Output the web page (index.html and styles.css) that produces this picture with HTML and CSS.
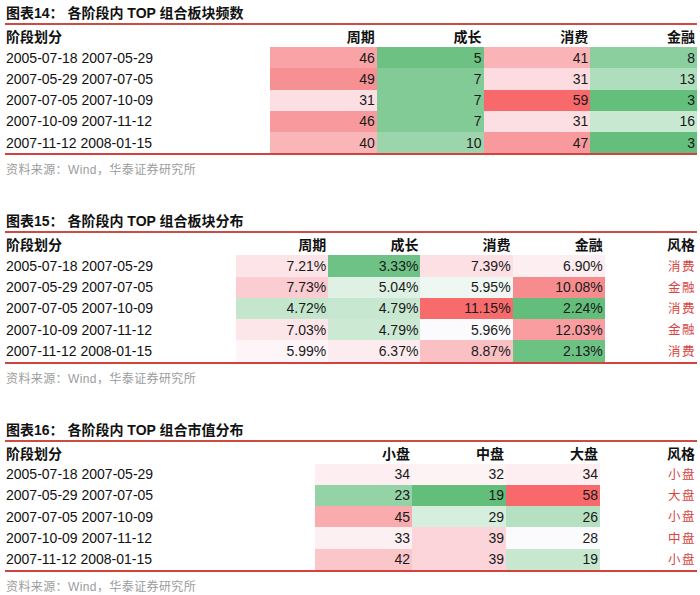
FILE: index.html
```html
<!DOCTYPE html>
<html lang="zh-CN">
<head>
<meta charset="utf-8">
<title>各阶段内 TOP 组合</title>
<link rel="stylesheet" href="styles.css">
</head>
<body>
<main class="page">

<section class="block first">
  <h2 class="title">图表14： 各阶段内 TOP 组合板块频数</h2>
  <div class="grid g14">
    <div class="hd lbl">阶段划分</div><div class="hd">周期</div><div class="hd">成长</div><div class="hd">消费</div><div class="hd">金融</div>

    <div class="lbl">2005-07-18 2007-05-29</div>
    <div class="c" style="background:#f9a3a6">46</div>
    <div class="c" style="background:#6cc183">5</div>
    <div class="c" style="background:#fab3b6">41</div>
    <div class="c" style="background:#8bcf9f">8</div>

    <div class="lbl">2007-05-29 2007-07-05</div>
    <div class="c" style="background:#f79093">49</div>
    <div class="c" style="background:#82ca96">7</div>
    <div class="c" style="background:#fcdce0">31</div>
    <div class="c" style="background:#afdebc">13</div>

    <div class="lbl">2007-07-05 2007-10-09</div>
    <div class="c" style="background:#fcdfe3">31</div>
    <div class="c" style="background:#82ca96">7</div>
    <div class="c" style="background:#f8696b">59</div>
    <div class="c" style="background:#65bf7c">3</div>

    <div class="lbl">2007-10-09 2007-11-12</div>
    <div class="c" style="background:#f89a9d">46</div>
    <div class="c" style="background:#82ca96">7</div>
    <div class="c" style="background:#fcdfe3">31</div>
    <div class="c" style="background:#c8e8d1">16</div>

    <div class="lbl">2007-11-12 2008-01-15</div>
    <div class="c" style="background:#f9b6b9">40</div>
    <div class="c" style="background:#9cd5ac">10</div>
    <div class="c" style="background:#f89a9d">47</div>
    <div class="c" style="background:#65bf7c">3</div>
  </div>
  <p class="source">资料来源：Wind，华泰证券研究所</p>
</section>

<section class="block">
  <h2 class="title">图表15： 各阶段内 TOP 组合板块分布</h2>
  <div class="grid g15">
    <div class="hd lbl">阶段划分</div><div class="hd">周期</div><div class="hd">成长</div><div class="hd">消费</div><div class="hd">金融</div><div class="hd">风格</div>

    <div class="lbl">2005-07-18 2007-05-29</div>
    <div class="c" style="background:#fde4e8">7.21%</div>
    <div class="c" style="background:#6fc286">3.33%</div>
    <div class="c" style="background:#fde0e4">7.39%</div>
    <div class="c" style="background:#fdeef1">6.90%</div>
    <div class="c style">消费</div>

    <div class="lbl">2007-05-29 2007-07-05</div>
    <div class="c" style="background:#fbccd1">7.73%</div>
    <div class="c" style="background:#dff1e5">5.04%</div>
    <div class="c" style="background:#eef7f1">5.95%</div>
    <div class="c" style="background:#f78c8f">10.08%</div>
    <div class="c style">金融</div>

    <div class="lbl">2007-07-05 2007-10-09</div>
    <div class="c" style="background:#c4e6cd">4.72%</div>
    <div class="c" style="background:#c7e7d0">4.79%</div>
    <div class="c" style="background:#f76b6d">11.15%</div>
    <div class="c" style="background:#63be7b">2.24%</div>
    <div class="c style">消费</div>

    <div class="lbl">2007-10-09 2007-11-12</div>
    <div class="c" style="background:#fde6ea">7.03%</div>
    <div class="c" style="background:#cbe9d3">4.79%</div>
    <div class="c" style="background:#fbfafc">5.96%</div>
    <div class="c" style="background:#f99da0">12.03%</div>
    <div class="c style">金融</div>

    <div class="lbl">2007-11-12 2008-01-15</div>
    <div class="c" style="background:#fdf5f7">5.99%</div>
    <div class="c" style="background:#fdecef">6.37%</div>
    <div class="c" style="background:#fac0c4">8.87%</div>
    <div class="c" style="background:#6cc283">2.13%</div>
    <div class="c style">消费</div>
  </div>
  <p class="source">资料来源：Wind，华泰证券研究所</p>
</section>

<section class="block">
  <h2 class="title">图表16： 各阶段内 TOP 组合市值分布</h2>
  <div class="grid g16">
    <div class="hd lbl">阶段划分</div><div class="hd">小盘</div><div class="hd">中盘</div><div class="hd">大盘</div><div class="hd">风格</div>

    <div class="lbl">2005-07-18 2007-05-29</div>
    <div class="c" style="background:#fdeef1">34</div>
    <div class="c" style="background:#fdf3f5">32</div>
    <div class="c" style="background:#fdeef1">34</div>
    <div class="c style">小盘</div>

    <div class="lbl">2007-05-29 2007-07-05</div>
    <div class="c" style="background:#94d3a6">23</div>
    <div class="c" style="background:#63be7b">19</div>
    <div class="c" style="background:#f8696b">58</div>
    <div class="c style">大盘</div>

    <div class="lbl">2007-07-05 2007-10-09</div>
    <div class="c" style="background:#f9abae">45</div>
    <div class="c" style="background:#d6eedd">29</div>
    <div class="c" style="background:#b5e0c1">26</div>
    <div class="c style">小盘</div>

    <div class="lbl">2007-10-09 2007-11-12</div>
    <div class="c" style="background:#fdf0f2">33</div>
    <div class="c" style="background:#fcd5da">39</div>
    <div class="c" style="background:#fbfbfd">28</div>
    <div class="c style">中盘</div>

    <div class="lbl">2007-11-12 2008-01-15</div>
    <div class="c" style="background:#fac6ca">42</div>
    <div class="c" style="background:#fcd5da">39</div>
    <div class="c" style="background:#c7e7cf">19</div>
    <div class="c style">小盘</div>
  </div>
  <p class="source">资料来源：Wind，华泰证券研究所</p>
</section>

</main>
</body>
</html>
```

FILE: styles.css
```css
html, body {
  margin: 0;
  padding: 0;
  background: #ffffff;
}

body {
  font-family: "Liberation Sans", "Noto Sans CJK SC", sans-serif;
  color: #111111;
  font-size: 14px;
}

.page {
  width: 692px;
  margin-left: 5px;
  padding-top: 3px;
}

.block {
  margin-top: 33px;
}

.block.first {
  margin-top: 0;
}

.title {
  margin: 0;
  height: 20px;
  line-height: 20px;
  padding-left: 1px;
  font-size: 14px;
  font-weight: bold;
  color: #111111;
  border-bottom: 2px solid #cc4b45;
  white-space: pre;
}

.grid {
  display: grid;
  grid-template-rows: 22px repeat(5, 21.25px);
  border-bottom: 2px solid #d2433f;
}

.g14 {
  grid-template-columns: 265px repeat(4, 1fr);
}

.g15 {
  grid-template-columns: 231px repeat(5, 1fr);
}

.g16 {
  grid-template-columns: 310px 97px 94px 94px 1fr;
}

.grid > div {
  display: flex;
  align-items: center;
  justify-content: flex-end;
  padding-right: 2px;
  white-space: nowrap;
  line-height: 1;
}

.grid > .lbl {
  justify-content: flex-start;
  padding-left: 1px;
  padding-right: 0;
}

.hd {
  font-weight: bold;
  font-family: "Noto Sans CJK SC", sans-serif;
  font-size: 14px;
  color: #111111;
}

.c {
  color: #1a1a1a;
}

.grid > .style {
  font-family: "Noto Sans CJK SC", sans-serif;
  font-size: 12.5px;
  color: #d8443f;
  letter-spacing: 1.5px;
  padding-right: 1px;
}

.source {
  margin: 7px 0 0 0;
  padding-left: 1px;
  height: 16px;
  line-height: 16px;
  font-size: 12px;
  letter-spacing: 0.4px;
  color: #9c9c9c;
  font-family: "Liberation Sans", "Noto Sans CJK SC", sans-serif;
}
```
